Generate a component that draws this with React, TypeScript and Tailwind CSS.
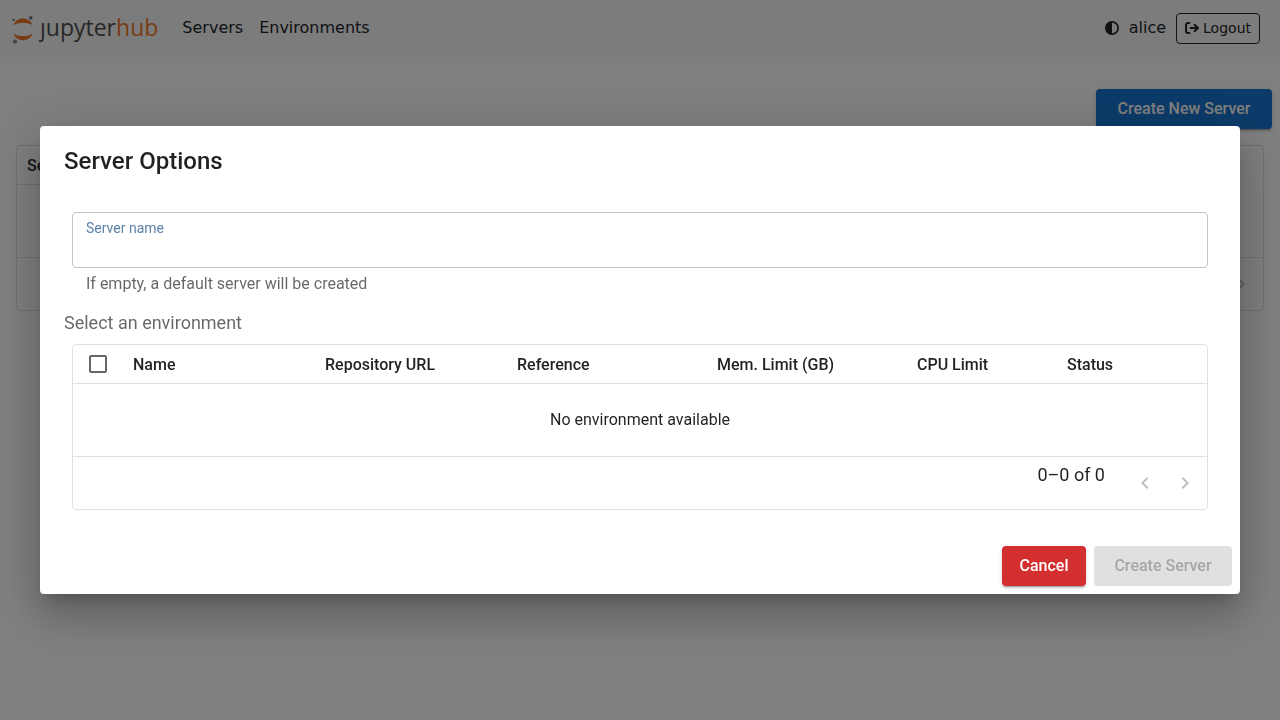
import { useState } from "react";
import type { ReactNode } from "react";
import { FaCircleHalfStroke } from "react-icons/fa6";
import { MdChevronLeft, MdChevronRight } from "react-icons/md";

function Logo() {
  return (
    <a href="#home" aria-label="JupyterHub" className="flex h-8 items-center gap-1.5">
      <svg width="22" height="36" viewBox="0 -5 22 36" aria-hidden="true">
        <path d="M1.2 10.4C3 6 6.6 3.6 11 3.6S19 6 20.8 10.4C18.4 8.6 15 7.7 11 7.7S3.6 8.6 1.2 10.4Z" fill="#f37726" />
        <path d="M1.2 18.2C3 22.6 6.6 25.2 11 25.2S19 22.6 20.8 18.2C18.4 20.2 15 21.1 11 21.1S3.6 20.2 1.2 18.2Z" fill="#f37726" />
        <circle cx="1.5" cy="5" r="1.2" fill="#767677" />
        <circle cx="18.8" cy="2.9" r="1.8" fill="#767677" />
        <circle cx="3" cy="26.7" r="2.1" fill="#8e8e8f" />
      </svg>
      <span className="pb-0.5 font-['Open_Sans',sans-serif] text-[23px] leading-8 text-[#4e4e4e]">
        ȷupyter<span className="text-[#f37726]">hub</span>
      </span>
    </a>
  );
}

function LogoutIcon() {
  return (
    <svg
      width="14"
      height="14"
      viewBox="0 0 14 14"
      fill="none"
      stroke="currentColor"
      strokeWidth="2"
      strokeLinecap="round"
      strokeLinejoin="round"
      aria-hidden="true"
    >
      <path d="M4.4 1.9H3A2 2 0 0 0 1 3.900V10.100A2 2 0 0 0 3 12.100H4.400" />
      <path d="M5.600 7H12.600M9.600 3.700L12.900 7L9.600 10.300" />
    </svg>
  );
}

function NavBar() {
  return (
    <nav className="flex h-[57px] items-center bg-[#f8f9fa] pr-5 pb-px pl-3 font-['DejaVu_Sans',sans-serif] text-base text-[#212529]">
      <Logo />
      <div className="ml-6 flex flex-1 gap-4">
        <a href="#servers">Servers</a>
        <a href="#environments">Environments</a>
      </div>
      <button type="button" aria-label="Toggle theme" className="mr-2.5">
        <FaCircleHalfStroke size={14} />
      </button>
      <span className="mr-2.5">alice</span>
      <a
        href="#logout"
        className="flex items-center gap-1 rounded border border-[#212529] px-2 py-1 text-sm leading-[21px]"
      >
        <LogoutIcon />
        Logout
      </a>
    </nav>
  );
}

function Pager() {
  return (
    <div className="flex h-[52px] items-center justify-end pr-0.5">
      <p className="mr-5 mb-4 text-lg leading-6">0–0 of 0</p>
      <button type="button" disabled aria-label="Previous page" className="p-2 text-black/25">
        <MdChevronLeft size={24} />
      </button>
      <button type="button" disabled aria-label="Next page" className="p-2 text-black/25">
        <MdChevronRight size={24} />
      </button>
    </div>
  );
}

function Grid({ head, message }: { head: ReactNode; message?: string }) {
  return (
    <div className="rounded border border-[#e0e0e0]">
      <table className="w-full table-fixed border-separate border-spacing-0 text-base">
        <thead>
          <tr className="text-left">{head}</tr>
        </thead>
        <tbody>
          <tr>
            <td colSpan={7} className="h-[73px] border-b border-[#e0e0e0] text-center">
              {message}
            </td>
          </tr>
        </tbody>
      </table>
      <Pager />
    </div>
  );
}

const columns = [
  { title: "Name", width: "" },
  { title: "Repository URL", width: "" },
  { title: "Reference", width: "w-[200px]" },
  { title: "Mem. Limit (GB)", width: "w-[200px]" },
  { title: "CPU Limit", width: "w-[150px]" },
  { title: "Status", width: "w-[150px]" },
];

const headCell = "h-[39px] border-b border-[#e0e0e0] px-2.5 pt-0.5 font-medium";

function ServerDialog() {
  const [name, setName] = useState("");
  return (
    <div className="fixed inset-0 flex items-center justify-center bg-black/50 px-8">
      <div
        role="dialog"
        aria-modal="true"
        aria-labelledby="dialog-title"
        className="w-full max-w-[1200px] rounded bg-white shadow-[0_11px_15px_-7px_rgba(0,0,0,0.2),0_24px_38px_3px_rgba(0,0,0,0.14),0_9px_46px_8px_rgba(0,0,0,0.12)]"
      >
        <h2 id="dialog-title" className="px-6 py-4 text-2xl leading-[38px] font-medium">
          Server Options
        </h2>
        <div className="px-6 pt-4 pb-9">
          <div className="mx-2">
            <div className="flex h-14 flex-col rounded border border-[#c4c4c4] px-[13px] pt-1.5">
              <label htmlFor="server-name" className="text-sm leading-[18px] text-[#5d81aa]">
                Server name
              </label>
              <input
                id="server-name"
                type="text"
                value={name}
                onChange={(e) => setName(e.target.value)}
                className="w-full flex-1 bg-transparent text-base outline-none"
              />
            </div>
            <p className="mt-1 px-3.5 text-base leading-6 text-black/60">
              If empty, a default server will be created
            </p>
          </div>
          <h3 className="mt-3.5 mb-2 text-lg leading-[26px] text-black/60">Select an environment</h3>
          <div className="mx-2">
            <Grid
              message="No environment available"
              head={
                <>
                  <th className="h-[39px] w-[50px] border-b border-[#e0e0e0]">
                    <input
                      type="checkbox"
                      aria-label="Select all environments"
                      className="mx-auto block size-[18px] appearance-none rounded-xs border-2 border-[#666] checked:bg-[#1976d2]"
                    />
                  </th>
                  {columns.map((c) => (
                    <th key={c.title} className={`${headCell} ${c.width}`}>
                      {c.title}
                    </th>
                  ))}
                </>
              }
            />
          </div>
        </div>
        <div className="flex justify-end gap-2 px-2 pb-2">
          <button
            type="button"
            className="h-10 min-w-21 rounded bg-[#d32f2f] px-4 font-medium text-white shadow-[0_3px_1px_-2px_rgba(0,0,0,0.2),0_2px_2px_rgba(0,0,0,0.14),0_1px_5px_rgba(0,0,0,0.12)]"
          >
            Cancel
          </button>
          <button
            type="button"
            disabled
            className="h-10 min-w-[138px] rounded bg-[#e0e0e0] px-4 font-medium text-[#a6a6a6]"
          >
            Create Server
          </button>
        </div>
      </div>
    </div>
  );
}

export default function App() {
  return (
    <div className="min-h-screen bg-white font-[Roboto,sans-serif] text-black/87">
      <NavBar />
      <main className="pt-8">
        <div className="flex justify-end px-2">
          <button
            type="button"
            className="h-10 min-w-44 rounded bg-[#1976d2] px-4 font-medium text-white shadow-[0_3px_1px_-2px_rgba(0,0,0,0.2),0_2px_2px_rgba(0,0,0,0.14),0_1px_5px_rgba(0,0,0,0.12)]"
          >
            Create New Server
          </button>
        </div>
        <div className="mx-4 mt-4">
          <Grid head={<th className={headCell}>Server name</th>} />
        </div>
      </main>
      <ServerDialog />
    </div>
  );
}
